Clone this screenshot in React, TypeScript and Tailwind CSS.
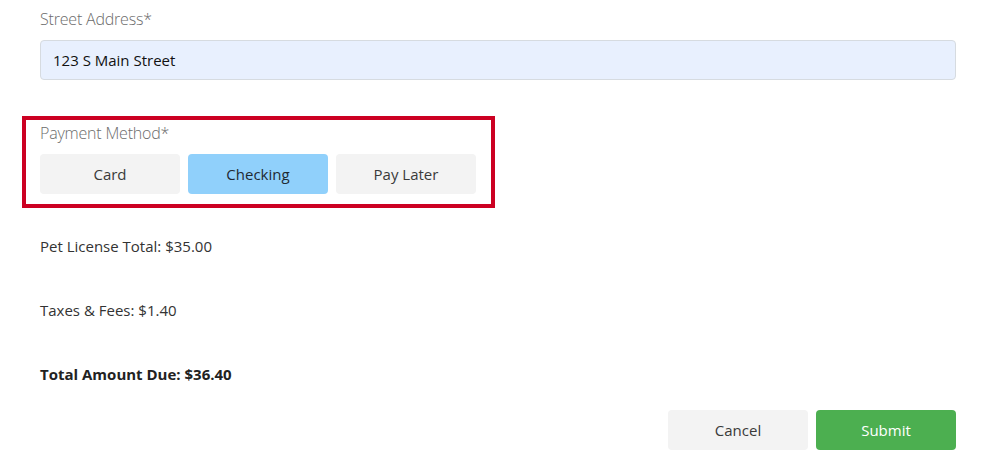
import React from "react";

export default function App() {
  const font = { fontFamily: '"Segoe UI", "Open Sans", "Noto Sans", sans-serif' };
  return (
    <div className="w-[1003px] h-[467px] bg-white text-[#212529]" style={font}>
      <div className="pl-[40px] pr-[47px] pt-[7px]">
        <label className="block text-[16px] leading-[24px] font-light text-[#6c6c6c] tracking-[-0.2px]">Street Address*</label>
        <div className="mt-[9px] h-[40px] rounded-[4px] border border-[#d6dbe0] bg-[#e8f0fe] flex items-center pl-[12px] text-[15px] text-[#111]">
          123 S Main Street
        </div>
      </div>
      <div className="ml-[22px] mt-[36px] w-[473px] h-[92px] border-[4px] border-[#cc0022] pl-[14px] pt-[1px]">
        <label className="block text-[16px] leading-[24px] font-light text-[#6c6c6c] tracking-[-0.2px]">Payment Method*</label>
        <div className="mt-[9px] flex gap-[8px]">
          <button className="w-[140px] h-[40px] rounded-[4px] bg-[#f3f3f3] text-[15px] text-[#3a3a3a]">Card</button>
          <button className="w-[140px] h-[40px] rounded-[4px] bg-[#90d0fb] text-[15px] text-[#1f2a33]">Checking</button>
          <button className="w-[140px] h-[40px] rounded-[4px] bg-[#f3f3f3] text-[15px] text-[#3a3a3a]">Pay Later</button>
        </div>
      </div>
      <div className="pl-[40px] text-[15px] text-[#333]">
        <div className="mt-[28px] leading-[20px]">Pet License Total: $35.00</div>
        <div className="mt-[44px] leading-[20px]">Taxes &amp; Fees: $1.40</div>
        <div className="mt-[44px] leading-[20px] font-bold text-[#222]">Total Amount Due: $36.40</div>
      </div>
      <div className="flex justify-end gap-[8px] pr-[47px] mt-[26px]">
        <button className="w-[140px] h-[40px] rounded-[4px] bg-[#f3f3f3] text-[15px] text-[#3a3a3a]">Cancel</button>
        <button className="w-[140px] h-[40px] rounded-[4px] bg-[#4caf50] text-[15px] text-white">Submit</button>
      </div>
    </div>
  );
}
